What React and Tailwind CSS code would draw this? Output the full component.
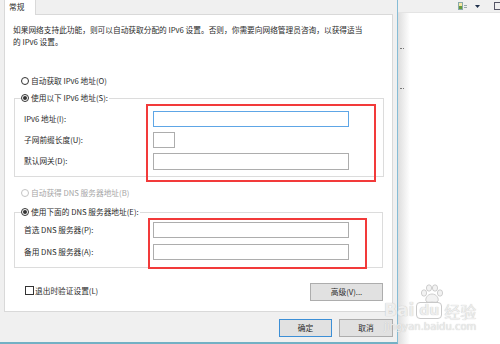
import React from 'react';

const Radio = ({ checked, disabled, label }) => (
  <div className="flex items-center h-[12px] gap-[2px]">
    <span
      className={`w-[8px] h-[8px] rounded-full border flex items-center justify-center bg-white ${
        disabled ? 'border-[#c4c4c4]' : 'border-[#333]'
      }`}
    >
      {checked && <span className="w-[4px] h-[4px] rounded-full bg-[#333]" />}
    </span>
    <span className={disabled ? 'text-[#a6a6a6]' : ''}>{label}</span>
  </div>
);

const Field = ({ label, inputClass }) => (
  <div className="flex items-center h-[16px] pl-[9px]">
    <div className="w-[129px]">{label}</div>
    <div className={`bg-white border ${inputClass}`} />
  </div>
);

const Button = ({ children, className = '' }) => (
  <div className={`h-[18px] flex items-center justify-center bg-[#e1e1e1] border ${className}`}>{children}</div>
);

export default function App() {
  return (
    <div className="relative w-[500px] h-[344px] flex overflow-hidden bg-white text-[7.7px] leading-[12px] text-[#2a2a2a] font-['Noto_Sans_CJK_SC','Noto_Sans',sans-serif]">
      {/* dialog */}
      <div className="w-[399px] h-full flex flex-col bg-[#f0f0f0] border-r border-r-[#86bcd6] border-b-2 border-b-[#73b0c4]">
        <div className="h-[14px] pl-[4px] flex">
          <div className="relative z-10 w-[32px] h-[15px] bg-white border-x border-[#d9d9d9] pl-[4px] pt-[1px]">常规</div>
        </div>

        <div className="ml-[4px] w-[389px] h-[298px] bg-white border border-[#d9d9d9] flex flex-col">
          <p className="pt-[9px] px-[8px] w-[370px]">
            如果网络支持此功能，则可以自动获取分配的 IPv6 设置。否则，你需要向网络管理员咨询，以获得适当的 IPv6 设置。
          </p>

          <div className="mt-[27px] pl-[16px]">
            <Radio label="自动获取 IPv6 地址(O)" />
          </div>

          <fieldset className="mt-[5px] ml-[9px] w-[370px] border border-[#dcdcdc] pb-[7px]">
            <legend className="ml-[6px] bg-white pr-[1px]">
              <Radio checked label="使用以下 IPv6 地址(S):" />
            </legend>
            <div className="pt-[7px] flex flex-col gap-[5px]">
              <Field label="IPv6 地址(I):" inputClass="w-[196px] h-[16px] border-[#5ea6e6]" />
              <Field label="子网前缀长度(U):" inputClass="w-[22px] h-[16px] border-[#adadad]" />
              <Field label="默认网关(D):" inputClass="w-[196px] h-[17px] border-[#adadad]" />
            </div>
          </fieldset>

          <div className="mt-[10px] pl-[16px]">
            <Radio disabled label="自动获得 DNS 服务器地址(B)" />
          </div>

          <fieldset className="mt-[7px] ml-[9px] w-[369px] border border-[#dcdcdc] pb-[7px]">
            <legend className="ml-[6px] bg-white pr-[1px]">
              <Radio checked label="使用下面的 DNS 服务器地址(E):" />
            </legend>
            <div className="pt-[4px] flex flex-col gap-[6px]">
              <Field label="首选 DNS 服务器(P):" inputClass="w-[196px] h-[16px] border-[#adadad]" />
              <Field label="备用 DNS 服务器(A):" inputClass="w-[196px] h-[16px] border-[#adadad]" />
            </div>
          </fieldset>

          <div className="mt-[15px] pl-[20px] pr-[9px] flex items-center justify-between">
            <div className="flex items-center gap-[1px] -mt-[3px]">
              <span className="w-[9px] h-[9px] border border-[#333] bg-white" />
              <span>退出时验证设置(L)</span>
            </div>
            <Button className="w-[73px] border-[#adadad]">高级(V)...</Button>
          </div>
        </div>

        <div className="mt-[7px] pr-[4px] flex justify-end gap-[7px]">
          <Button className="w-[53px] border-[#3c8fd6]">确定</Button>
          <Button className="w-[54px] border-[#adadad]">取消</Button>
        </div>
      </div>

      {/* window behind */}
      <div className="relative flex-1 h-full bg-white">
        <div className="h-[13px] bg-[#f0f0f0] border-b border-[#e4e4e4] flex items-center pl-[60px]">
          <div className="flex items-center gap-[1px]">
            <span className="w-[5px] h-[8px] border border-[#8aa] bg-[#f6e7a8] flex items-end">
              <span className="w-[3px] h-[3px] bg-[#6a9a3a]" />
            </span>
            <span className="w-[3px] h-[3px] border-y border-[#9aa]" />
          </div>
          <svg width="5" height="3" viewBox="0 0 5 3" className="ml-[8px]">
            <path d="M0 0 H5 L2.5 3 Z" fill="#1e2f4a" />
          </svg>
          <span className="ml-[14px] w-[6px] h-[8px] border border-[#556] border-r-0" />
        </div>
        <div className="absolute left-0 top-[13px] bottom-0 w-[12px] bg-linear-to-r from-[#dedede] to-transparent" />
        <div className="absolute left-[2px] top-[48px] w-[4px] border-t border-dotted border-[#777]" />
        <div className="absolute left-[2px] top-[88px] w-[4px] border-t border-dotted border-[#777]" />
      </div>

      {/* red annotation boxes */}
      <div className="absolute left-[146px] top-[104px] w-[230px] h-[78px] border-2 border-[#f23a3a]" />
      <div className="absolute left-[148px] top-[218px] w-[219px] h-[51px] border-2 border-[#f23a3a]" />

      {/* watermark */}
      <div className="absolute left-[384px] top-[284px] text-[#eeeeee] [text-shadow:0_0_1px_#b8b8b8] font-['DejaVu_Sans',sans-serif]">
        <svg width="28" height="20" viewBox="0 0 28 20" className="ml-[34px]">
          <g fill="#f2f2f2" stroke="#c4c4c4" strokeWidth="0.8">
            <ellipse cx="6" cy="9" rx="2.6" ry="3.2" />
            <ellipse cx="11" cy="4" rx="2.6" ry="3.2" />
            <ellipse cx="17" cy="4" rx="2.6" ry="3.2" />
            <ellipse cx="22" cy="9" rx="2.6" ry="3.2" />
            <path d="M14 10 C9 10 7 15 8 17 C9 19 12 18 14 18 C16 18 19 19 20 17 C21 15 19 10 14 10 Z" />
          </g>
        </svg>
        <div className="flex items-center -mt-[2px] h-[17px]">
          <span className="text-[17px] leading-none font-bold">Bai</span>
          <span className="ml-[2px] px-[2px] border border-[#c8c8c8] rounded-[4px] text-[14px] leading-[15px] font-bold">du</span>
          <span className="ml-[2px] text-[16px] leading-none font-['Noto_Sans_CJK_SC',sans-serif]">经验</span>
        </div>
        <div className="mt-[3px] text-[10px] leading-none">jingyan.baidu.com</div>
      </div>
    </div>
  );
}
